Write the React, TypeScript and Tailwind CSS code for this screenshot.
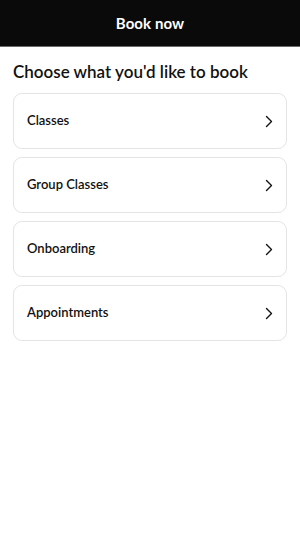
import React from "react";

const items = ["Classes", "Group Classes", "Onboarding", "Appointments"];

function Chevron() {
  return (
    <svg width="8" height="13" viewBox="0 0 8 13" fill="none" className="shrink-0">
      <path d="M1.5 1.5L6.5 6.5L1.5 11.5" stroke="#111" strokeWidth="1.4" strokeLinecap="round" strokeLinejoin="round" />
    </svg>
  );
}

export default function App() {
  return (
    <div className="w-[300px] min-h-[533px] bg-white" style={{ fontFamily: "Lato, 'Noto Sans', sans-serif" }}>
      <div className="h-[47px] bg-[#0a0a0a] border-b border-[#6b6b6b] flex items-center justify-center">
        <span className="text-white text-[15px] font-bold tracking-[0.1px]">Book now</span>
      </div>
      <div className="px-[13px]">
        <h1 className="text-[#111] text-[17px] font-semibold mt-[15px] mb-[11px] leading-[20px]">Choose what you'd like to book</h1>
        <div className="flex flex-col gap-[8px]">
          {items.map((t) => (
            <div key={t} className="h-[56px] rounded-[9px] border border-[#e4e4e4] flex items-center justify-between pl-[13px] pr-[13px]">
              <span className="text-[#111] text-[13px] font-semibold">{t}</span>
              <Chevron />
            </div>
          ))}
        </div>
      </div>
    </div>
  );
}
